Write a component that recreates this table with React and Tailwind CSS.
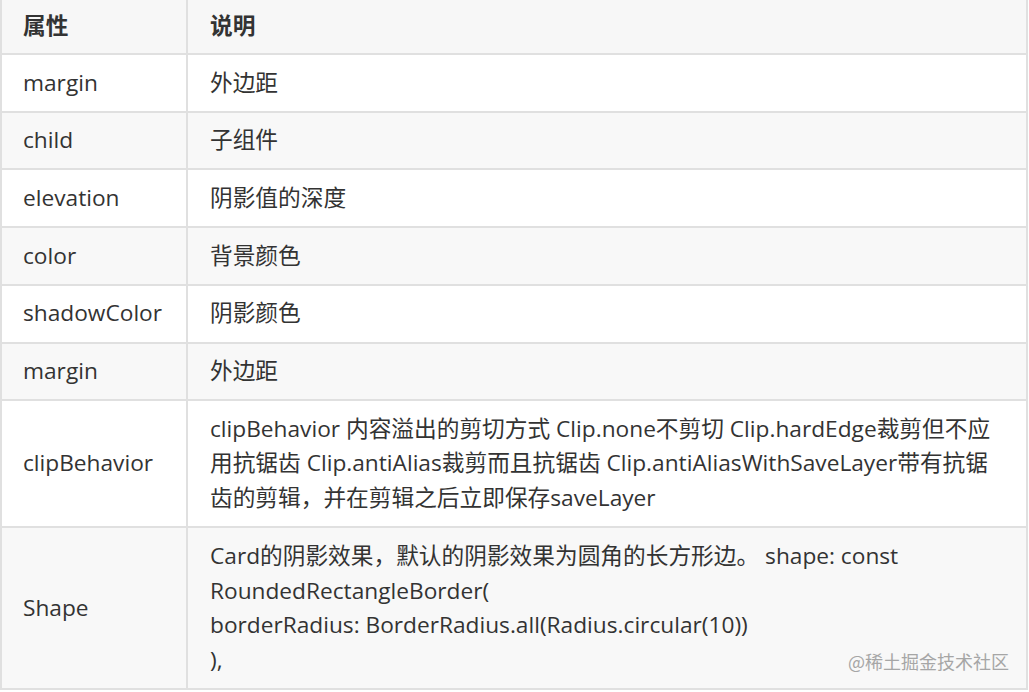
import React from "react";

const rows = [
  { k: "margin", v: "外边距" },
  { k: "child", v: "子组件" },
  { k: "elevation", v: "阴影值的深度" },
  { k: "color", v: "背景颜色" },
  { k: "shadowColor", v: "阴影颜色" },
  { k: "margin", v: "外边距" },
  {
    k: "clipBehavior",
    v: "clipBehavior 内容溢出的剪切方式 Clip.none不剪切 Clip.hardEdge裁剪但不应用抗锯齿 Clip.antiAlias裁剪而且抗锯齿 Clip.antiAliasWithSaveLayer带有抗锯齿的剪辑，并在剪辑之后立即保存saveLayer",
  },
  {
    k: "Shape",
    v: (
      <>
        Card的阴影效果，默认的阴影效果为圆角的长方形边。 shape: const RoundedRectangleBorder(
        <br />
        borderRadius: BorderRadius.all(Radius.circular(10))
        <br />
        ),
      </>
    ),
  },
];

export default function App() {
  return (
    <div
      className="relative w-[1029px] h-[692px] bg-white text-[#333333] text-[22.7px] leading-[34.7px]"
      style={{ fontFamily: '"Open Sans", "Noto Sans CJK SC", sans-serif' }}
    >
      <div className="w-[1028px] border-l-2 border-r-2 border-[#e0e0e0]">
        <div className="flex bg-[#f7f7f7] border-b-2 border-[#e0e0e0] h-[55px]">
          <div className="w-[186px] shrink-0 border-r-2 border-[#e0e0e0] px-[21px] pt-[9px] font-bold">
            属性
          </div>
          <div className="flex-1 px-[22px] pt-[9px] font-bold">说明</div>
        </div>
        {rows.map((r, i) => (
          <div
            key={i}
            className={`flex border-b-2 border-[#e0e0e0] ${i % 2 === 1 ? "bg-[#f8f8f8]" : "bg-white"}`}
          >
            <div className="w-[186px] shrink-0 border-r-2 border-[#e0e0e0] px-[21px] py-[10.5px] flex items-center">
              {r.k}
            </div>
            <div className="flex-1 pl-[22px] pr-[18px] py-[10.5px]">{r.v}</div>
          </div>
        ))}
      </div>
      <div
        className="absolute right-[20px] top-[648px] text-[18px] leading-[26px] text-[#a6a6a6]"
        style={{ fontFamily: '"Noto Sans CJK SC", sans-serif' }}
      >
        @稀土掘金技术社区
      </div>
    </div>
  );
}
